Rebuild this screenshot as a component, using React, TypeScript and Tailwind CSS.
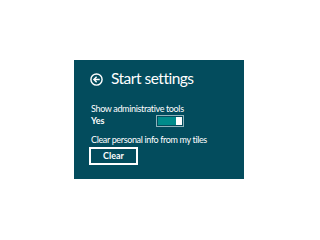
export default function App() {
  return (
    <div className="w-[320px] h-[240px] bg-white pt-[60px] pl-[74px]" style={{ fontFamily: 'Lato, "Open Sans", sans-serif' }}>
      <div className="w-[170px] h-[119px] bg-[#034c5d] text-white pl-[16px] pt-[8px]">
        <div className="flex items-center gap-[8px] h-[22px]">
          <svg width="13" height="13" viewBox="0 0 20 20">
            <circle cx="10" cy="10" r="8.6" fill="none" stroke="white" strokeWidth="2.2" />
            <path d="M15 10H6.5M10.2 5.8L6 10L10.2 14.2" fill="none" stroke="white" strokeWidth="2.2" />
          </svg>
          <span className="text-[15.5px] leading-none tracking-[-0.5px]">Start settings</span>
        </div>
        <div className="mt-[13px] text-[9px] leading-[11px] pl-[1px] tracking-[-0.35px]">Show administrative tools</div>
        <div className="flex items-center h-[14px] pl-[1px]">
          <span className="text-[9px] font-bold w-[65px]">Yes</span>
          <div className="w-[28px] h-[12px] border border-[#8fb3bb] p-[1px] flex">
            <div className="flex-1 bg-[#008b8b]" />
            <div className="w-[6px] bg-white" />
          </div>
        </div>
        <div className="mt-[6px] text-[9px] leading-[11px] pl-[1px] tracking-[-0.35px]">Clear personal info from my tiles</div>
        <div className="mt-[2px] -ml-[1px] w-[49px] h-[18px] border-2 border-white flex items-center justify-center text-[9px] font-bold">
          Clear
        </div>
      </div>
    </div>
  );
}
